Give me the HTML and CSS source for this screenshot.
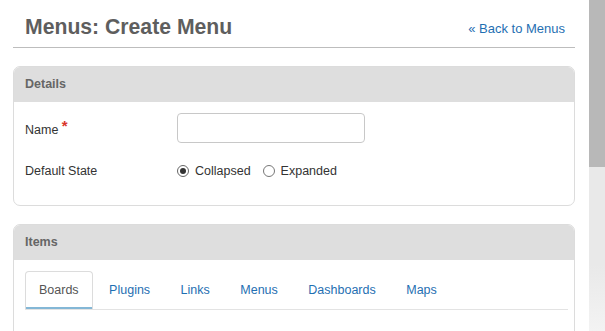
FILE: index.html
```html
<!DOCTYPE html>
<html lang="en">
<head>
<meta charset="utf-8">
<title>Menus: Create Menu</title>
<link rel="stylesheet" href="styles.css">
</head>
<body>
<div class="page">
  <header class="page-header">
    <h1 class="page-title">Menus: Create Menu</h1>
    <a class="back-link" href="#">« Back to Menus</a>
  </header>

  <section class="panel">
    <div class="panel-heading">Details</div>
    <div class="panel-body details-body">
      <div class="form-row">
        <label class="form-label">Name <span class="required">*</span></label>
        <div class="form-field"><input class="text-input" type="text"></div>
      </div>
      <div class="form-row">
        <span class="form-label">Default State</span>
        <div class="form-field radios">
          <label class="radio"><span class="radio-circle checked"></span>Collapsed</label>
          <label class="radio"><span class="radio-circle"></span>Expanded</label>
        </div>
      </div>
    </div>
  </section>

  <section class="panel">
    <div class="panel-heading">Items</div>
    <div class="panel-body items-body">
      <ul class="tabs">
        <li class="tab active">Boards</li>
        <li class="tab">Plugins</li>
        <li class="tab">Links</li>
        <li class="tab">Menus</li>
        <li class="tab">Dashboards</li>
        <li class="tab">Maps</li>
      </ul>
      <div class="tab-content"></div>
    </div>
  </section>
</div>
<div class="scrollbar"><div class="scroll-thumb"></div></div>
</body>
</html>
```

FILE: styles.css
```css
html, body {
  margin: 0;
  padding: 0;
  height: 100%;
  overflow: hidden;
}

body {
  display: flex;
  font-family: "Liberation Sans", Arial, sans-serif;
  font-size: 12.5px;
  color: #333;
  background: #fff;
}

.page {
  flex: 1;
  padding: 0 14px 0 13px;
  min-width: 0;
}

.page-header {
  display: flex;
  align-items: baseline;
  justify-content: space-between;
  padding: 15px 10px 8px 12px;
  border-bottom: 1px solid #bdbdbd;
}

.page-title {
  margin: 0;
  font-size: 21.2px;
  font-weight: bold;
  color: #5e5e5e;
  line-height: 24px;
}

.back-link {
  font-size: 13px;
  color: #1f6fb2;
  text-decoration: none;
  position: relative;
  top: -1px;
}

.panel {
  margin-top: 18px;
  border: 1px solid #dcdcdc;
  border-radius: 7px;
  overflow: hidden;
}

.panel-heading {
  background: #dedede;
  height: 35px;
  line-height: 35px;
  padding: 0 11px;
  font-weight: bold;
  color: #666;
  font-size: 12.5px;
}

.details-body {
  padding: 11px 11px 7px;
}

.form-row {
  display: flex;
  align-items: center;
  min-height: 30px;
  margin-bottom: 13px;
}

.form-row:last-child {
  margin-bottom: 12px;
}

.form-label {
  width: 152px;
  flex: none;
  color: #333;
}

.required {
  color: #d9362b;
  font-weight: bold;
  font-size: 15px;
  position: relative;
  top: -3px;
}

.text-input {
  box-sizing: border-box;
  width: 188px;
  height: 30px;
  border: 1px solid #c8c8c8;
  border-radius: 4px;
  margin: 0;
}

.radios {
  display: flex;
  gap: 12px;
}

.radio {
  display: flex;
  align-items: center;
  color: #333;
}

.radio-circle {
  box-sizing: border-box;
  width: 12px;
  height: 12px;
  border: 1px solid #666;
  border-radius: 50%;
  margin-right: 6px;
  display: flex;
  align-items: center;
  justify-content: center;
}

.radio-circle.checked::after {
  content: "";
  width: 6px;
  height: 6px;
  border-radius: 50%;
  background: #333;
}

.radio-circle:not(.checked) {
  border-color: #777;
}

.items-body {
  padding: 11px 6px 0 11px;
  height: 120px;
}

.tabs {
  list-style: none;
  margin: 0;
  padding: 0;
  display: flex;
  border-bottom: 1px solid #e3e3e3;
}

.tab {
  height: 37px;
  line-height: 37px;
  padding: 0 13px;
  margin-right: 2.5px;
  color: #1f6fb2;
  border: 1px solid transparent;
  border-bottom: 0;
}

.tab.active {
  color: #555;
  border-color: #dcdcdc;
  border-radius: 4px 4px 0 0;
  box-shadow: inset 0 -2px 0 #84b7d6;
}

.scrollbar {
  width: 16px;
  flex: none;
  background: linear-gradient(#e9e9e9 80%, #f3f3f3);
}

.scroll-thumb {
  height: 167px;
  background: #b8b8b8;
}
```
